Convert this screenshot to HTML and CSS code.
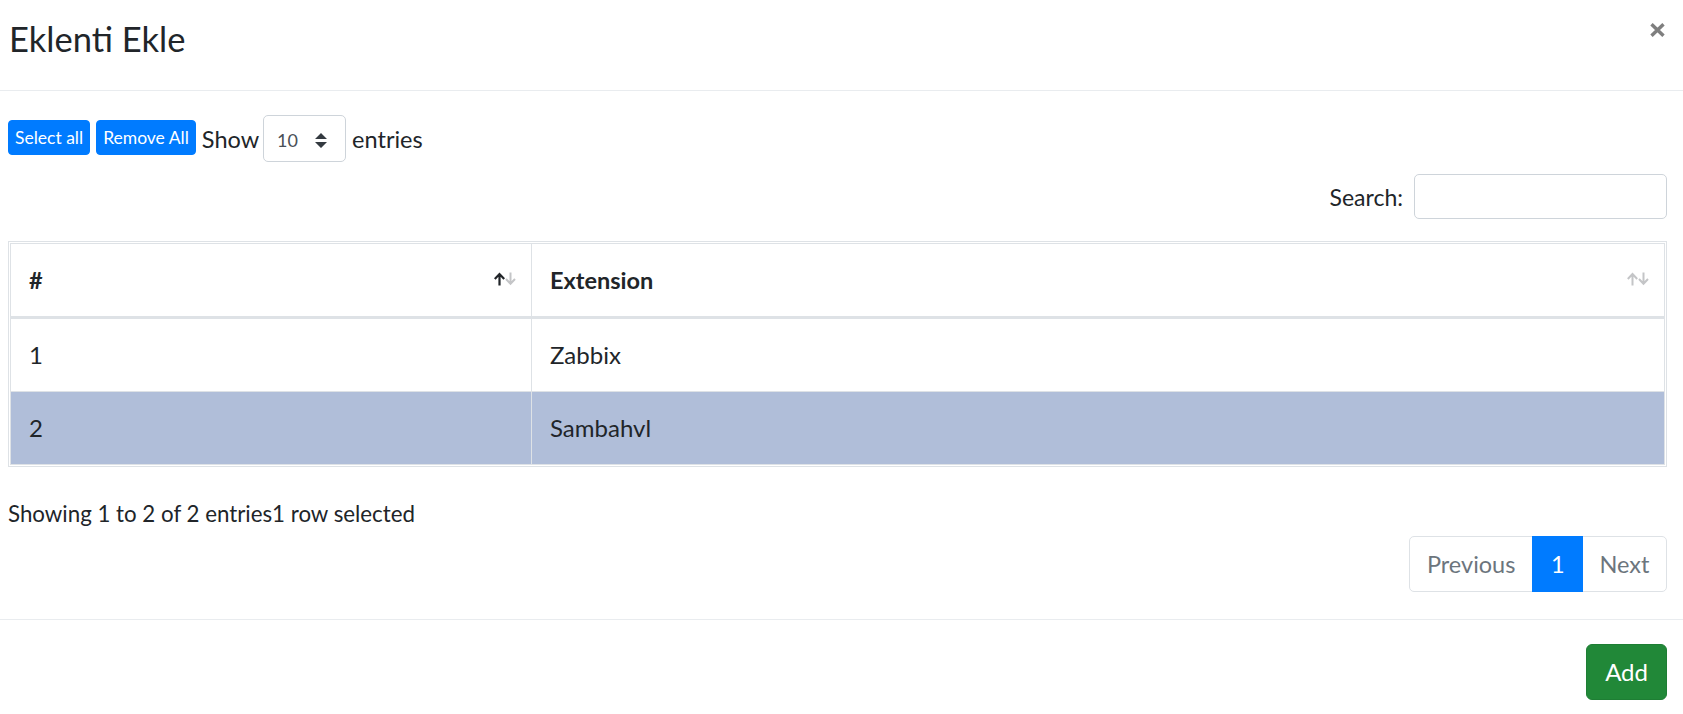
FILE: index.html
```html
<!DOCTYPE html>
<html lang="tr">
<head>
<meta charset="utf-8">
<title>Eklenti Ekle</title>
<link rel="stylesheet" href="styles.css">
</head>
<body>
<div class="modal">
  <div class="modal-header">
    <h4 class="modal-title">Eklenti Ekle</h4>
    <span class="close" aria-label="Close">
      <svg width="15" height="14" viewBox="0 0 15 14"><path d="M1.5 1.2 L13.5 12.8 M13.5 1.2 L1.5 12.8" stroke="#7f7f7f" stroke-width="3.4" fill="none"/></svg>
    </span>
  </div>
  <div class="modal-body">
    <div class="length-row">
      <span class="btn btn-xs btn-primary">Select all</span>
      <span class="btn btn-xs btn-primary">Remove All</span>
      <span class="lbl">Show</span>
      <span class="select">
        <span class="select-val">10</span>
        <svg width="12" height="15" viewBox="0 0 4 5"><path fill="#343a40" d="M2 0L0 2h4zm0 5L0 3h4z"/></svg>
      </span>
      <span class="lbl">entries</span>
    </div>
    <div class="filter-row">
      <label class="search-lbl">Search:</label>
      <input class="search-input" type="search">
    </div>
    <div class="tbl-wrap">
      <table class="tbl">
        <colgroup><col class="c1"><col></colgroup>
        <thead>
          <tr>
            <th class="first"><div class="th-in"><span>#</span>
              <svg class="sort" width="24" height="14" viewBox="0 0 24 14"><path d="M6.5 13.5V2.2 M1.8 7 L6.5 2 L11.2 7" stroke="#212529" stroke-width="2.2" fill="none"/><path d="M17.5 0.5V11.8 M13 7 L17.5 11.8 L22 7" stroke="#c4c5c7" stroke-width="2" fill="none"/></svg>
            </div></th>
            <th><div class="th-in"><span>Extension</span>
              <svg class="sort" width="24" height="14" viewBox="0 0 24 14"><path d="M6.5 13.5V2.2 M1.8 7 L6.5 2 L11.2 7" stroke="#c4c5c7" stroke-width="2" fill="none"/><path d="M17.5 0.5V11.8 M13 7 L17.5 11.8 L22 7" stroke="#c4c5c7" stroke-width="2" fill="none"/></svg>
            </div></th>
          </tr>
        </thead>
        <tbody>
          <tr><td class="first">1</td><td>Zabbix</td></tr>
          <tr class="selected"><td class="first">2</td><td>Sambahvl</td></tr>
        </tbody>
      </table>
    </div>
    <div class="info">Showing 1 to 2 of 2 entries1 row selected</div>
    <div class="pager-row">
      <ul class="pagination">
        <li class="page-item disabled"><span class="page-link prev">Previous</span></li>
        <li class="page-item active"><span class="page-link">1</span></li>
        <li class="page-item disabled"><span class="page-link next">Next</span></li>
      </ul>
    </div>
  </div>
  <div class="modal-footer">
    <span class="btn btn-success">Add</span>
  </div>
</div>
</body>
</html>
```
FILE: styles.css
```css
* { box-sizing: border-box; }
html, body { margin: 0; padding: 0; background: #fff; }
body {
  font-family: "Lato", "Liberation Sans", sans-serif;
  font-size: 23.5px;
  line-height: 36px;
  color: #212529;
  width: 1683px;
  height: 714px;
  overflow: hidden;
}
.modal { width: 100%; }

.modal-header {
  display: flex;
  justify-content: space-between;
  align-items: flex-start;
  padding: 15px 18px 0 8px;
  border-bottom: 1px solid #e9ecef;
  height: 91px;
}
.modal-title {
  margin: 0;
  font-size: 34.5px;
  line-height: 48px;
  font-weight: 400;
  padding-left: 1px;
}
.close { display: block; margin-top: 8px; line-height: 0; }

.modal-body { padding: 24px 16px 27px 8px; }

.length-row {
  display: flex;
  align-items: center;
  height: 47px;
}
.btn {
  display: inline-block;
  color: #fff;
  text-align: center;
  white-space: nowrap;
}
.btn-xs {
  font-size: 17.5px;
  line-height: 27px;
  padding: 3px 6px;
  border-radius: 4px;
  border: 1px solid #007bff;
  margin-top: -3px;
}
.btn-primary { background: #007bff; }
.btn-xs + .btn-xs { margin-left: 6px; }
.lbl { margin-left: 6px; }
.select {
  display: inline-flex;
  align-items: center;
  justify-content: space-between;
  width: 83px;
  height: 47px;
  margin-left: 4px;
  padding: 0 18px 0 13px;
  border: 1px solid #ced4da;
  border-radius: 5px;
  font-size: 18px;
  color: #495057;
}
.select-val { padding-top: 3px; }
.select svg { margin-top: 3px; }
.select + .lbl { margin-left: 6px; }

.filter-row {
  display: flex;
  justify-content: flex-end;
  align-items: center;
  margin-top: 12px;
  height: 45px;
}
.search-lbl { margin-right: 11px; font-size: 23px; }
.search-input {
  width: 253px;
  height: 45px;
  border: 1px solid #ced4da;
  border-radius: 5px;
  padding: 0 12px;
  font: inherit;
  outline: none;
}

.tbl-wrap {
  margin-top: 22px;
  border: 1px solid #dee2e6;
  padding: 1px;
}
.tbl {
  width: 100%;
  border-collapse: separate;
  border-spacing: 0;
  table-layout: fixed;
}
.c1 { width: 522px; }
.tbl th, .tbl td {
  text-align: left;
  padding: 18px;
  line-height: 36px;
  font-size: 24px;
  border-right: 1px solid #dee2e6;
  border-bottom: 1px solid #dee2e6;
  vertical-align: middle;
}
.tbl th {
  border-top: 1px solid #dee2e6;
  border-bottom: 3px solid #dee2e6;
  font-weight: 700;
  font-size: 23.5px;
  padding-right: 14px;
}
.tbl .first { border-left: 1px solid #dee2e6; }
.th-in {
  display: flex;
  justify-content: space-between;
  align-items: center;
}
.sort { margin-top: -2px; }
.selected td { background: #b0bed9; }

.info {
  margin-top: 29px;
  line-height: 36px;
  font-size: 22.3px;
}
.pager-row {
  display: flex;
  justify-content: flex-end;
  margin-top: 4px;
}
.pagination {
  display: flex;
  list-style: none;
  margin: 0;
  padding: 0;
}
.page-link {
  display: block;
  padding: 12px 18px;
  line-height: 30px;
  font-size: 23.5px;
  border: 1px solid #dee2e6;
  color: #6c757d;
  background: #fff;
}
.page-link.prev { padding: 12px 17px; }
.page-link.next { padding: 12px 16.5px; }
.page-item + .page-item .page-link { margin-left: -1px; }
.page-item:first-child .page-link { border-radius: 5px 0 0 5px; }
.page-item:last-child .page-link { border-radius: 0 5px 5px 0; }
.page-item.active .page-link {
  background: #007bff;
  border-color: #007bff;
  color: #fff;
  position: relative;
  z-index: 1;
  padding: 12px 17.5px;
}

.modal-footer {
  display: flex;
  justify-content: flex-end;
  border-top: 1px solid #e9ecef;
  padding: 24px 16px 0 8px;
}
.btn-success {
  background: #218838;
  border: 1px solid #1e7e34;
  border-radius: 6px;
  font-size: 24px;
  line-height: 36px;
  padding: 9px 18px;
}
```
